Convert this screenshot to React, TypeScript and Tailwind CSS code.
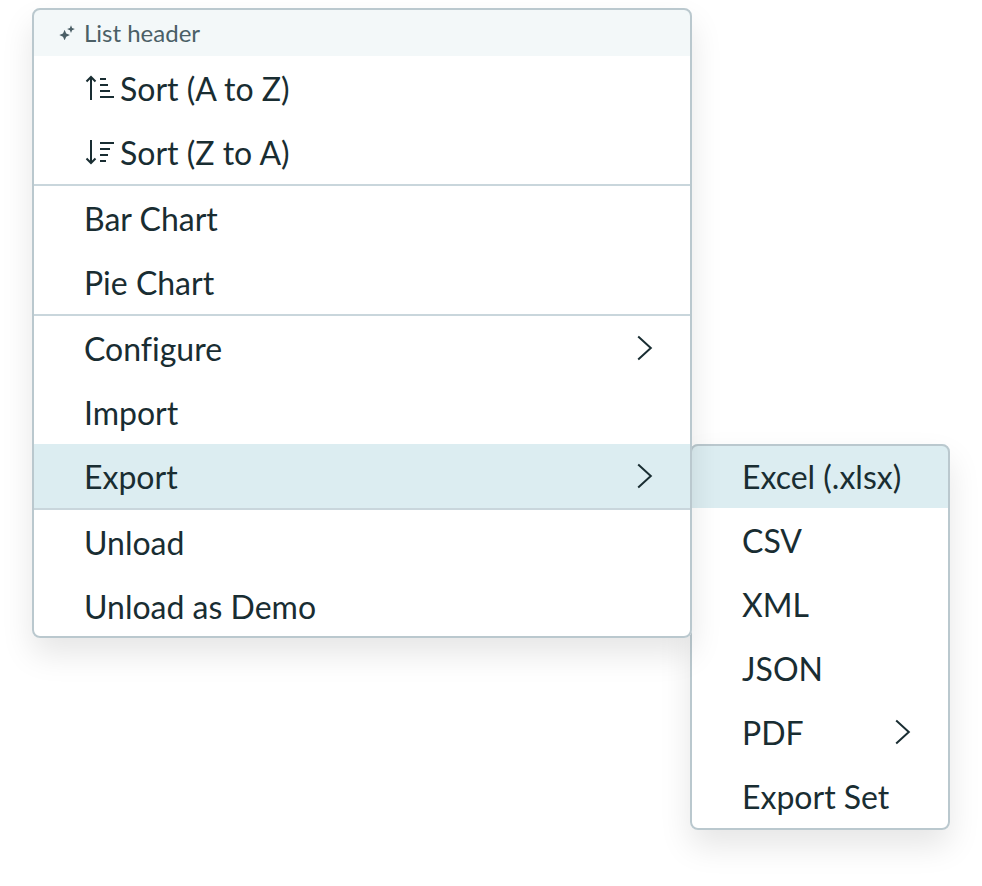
import type { ReactNode } from "react";
import clsx from "clsx";

function SparkleIcon() {
  return (
    <svg width="16" height="16" viewBox="0 0 16 16" fill="currentColor">
      <path d="M5.6 5.8 7.2 9.5 10.9 11.1 7.2 12.7 5.6 16.4 4 12.7.3 11.1 4 9.5Z" />
      <path d="M12 1.2 13.1 4 15.9 5.1 13.1 6.2 12 9 10.9 6.2 8.1 5.1 10.9 4Z" />
    </svg>
  );
}

function SortUpIcon() {
  return (
    <svg width="30" height="26" viewBox="0 0 30 26" fill="none" stroke="currentColor" strokeWidth="2">
      <path d="M7 25V2.5M2.5 6.5 7 2 11.5 6.5" />
      <path d="M16 4h6M16 10h8M16 16h10M16 22h14" />
    </svg>
  );
}

function SortDownIcon() {
  return (
    <svg width="30" height="26" viewBox="0 0 30 26" fill="none" stroke="currentColor" strokeWidth="2">
      <path d="M7 1V23.5M2.5 19.5 7 24 11.5 19.5" />
      <path d="M16 4h14M16 10h10M16 16h8M16 22h6" />
    </svg>
  );
}

function ChevronIcon() {
  return (
    <svg width="16" height="26" viewBox="0 0 16 26" fill="none" stroke="currentColor" strokeWidth="2">
      <path d="M1.2 1.5 13.8 13 1.2 24.5" />
    </svg>
  );
}

interface ItemProps {
  label: string;
  icon?: ReactNode;
  active?: boolean;
  submenu?: boolean;
}

function Item({ label, icon, active, submenu }: ItemProps) {
  return (
    <li
      className={clsx(
        "flex h-16 items-center justify-between pl-[52px] pr-[39px]",
        active && "bg-[#dcedf1]"
      )}
    >
      <span className="flex items-center gap-1.5 whitespace-nowrap pt-px">
        {icon && <span className="-mt-px">{icon}</span>}
        {label}
      </span>
      {submenu && <ChevronIcon />}
    </li>
  );
}

function Divider() {
  return <li className="h-0.5 bg-[#c9d6dc]" />;
}

// the outline is drawn over the rows, so highlighted ones keep their full height
function Menu({ className, children }: { className: string; children: ReactNode }) {
  return (
    <ul
      className={clsx(
        "overflow-hidden rounded-lg bg-white outline-2 -outline-offset-2 outline-[#bac8ce] shadow-[0_16px_32px_rgba(0,0,0,0.1)]",
        className
      )}
    >
      {children}
    </ul>
  );
}

export default function App() {
  return (
    <div className="flex h-[886px] w-[982px] items-start overflow-hidden bg-white pl-8 pt-2 font-['Lato',sans-serif] text-[32px] leading-10 text-[#192d32] [font-variant-ligatures:no-common-ligatures]">
      <Menu className="relative z-10 w-[660px]">
        <li className="flex h-12 items-center gap-[9px] bg-[#f3f8f9] pl-[27px] text-2xl text-[#4b5f66]">
          <SparkleIcon />
          <span className="pt-px">List header</span>
        </li>
        <Item label="Sort (A to Z)" icon={<SortUpIcon />} />
        <Item label="Sort (Z to A)" icon={<SortDownIcon />} />
        <Divider />
        <Item label="Bar Chart" />
        <Item label="Pie Chart" />
        <Divider />
        <Item label="Configure" submenu />
        <Item label="Import" />
        <Item label="Export" active submenu />
        <Divider />
        <Item label="Unload" />
        <Item label="Unload as Demo" />
      </Menu>
      <Menu className="-ml-0.5 mt-[436px] w-[260px]">
        <Item label="Excel (.xlsx)" active />
        <Item label="CSV" />
        <Item label="XML" />
        <Item label="JSON" />
        <Item label="PDF" submenu />
        <Item label="Export Set" />
        <li className="h-0.5" />
      </Menu>
    </div>
  );
}
